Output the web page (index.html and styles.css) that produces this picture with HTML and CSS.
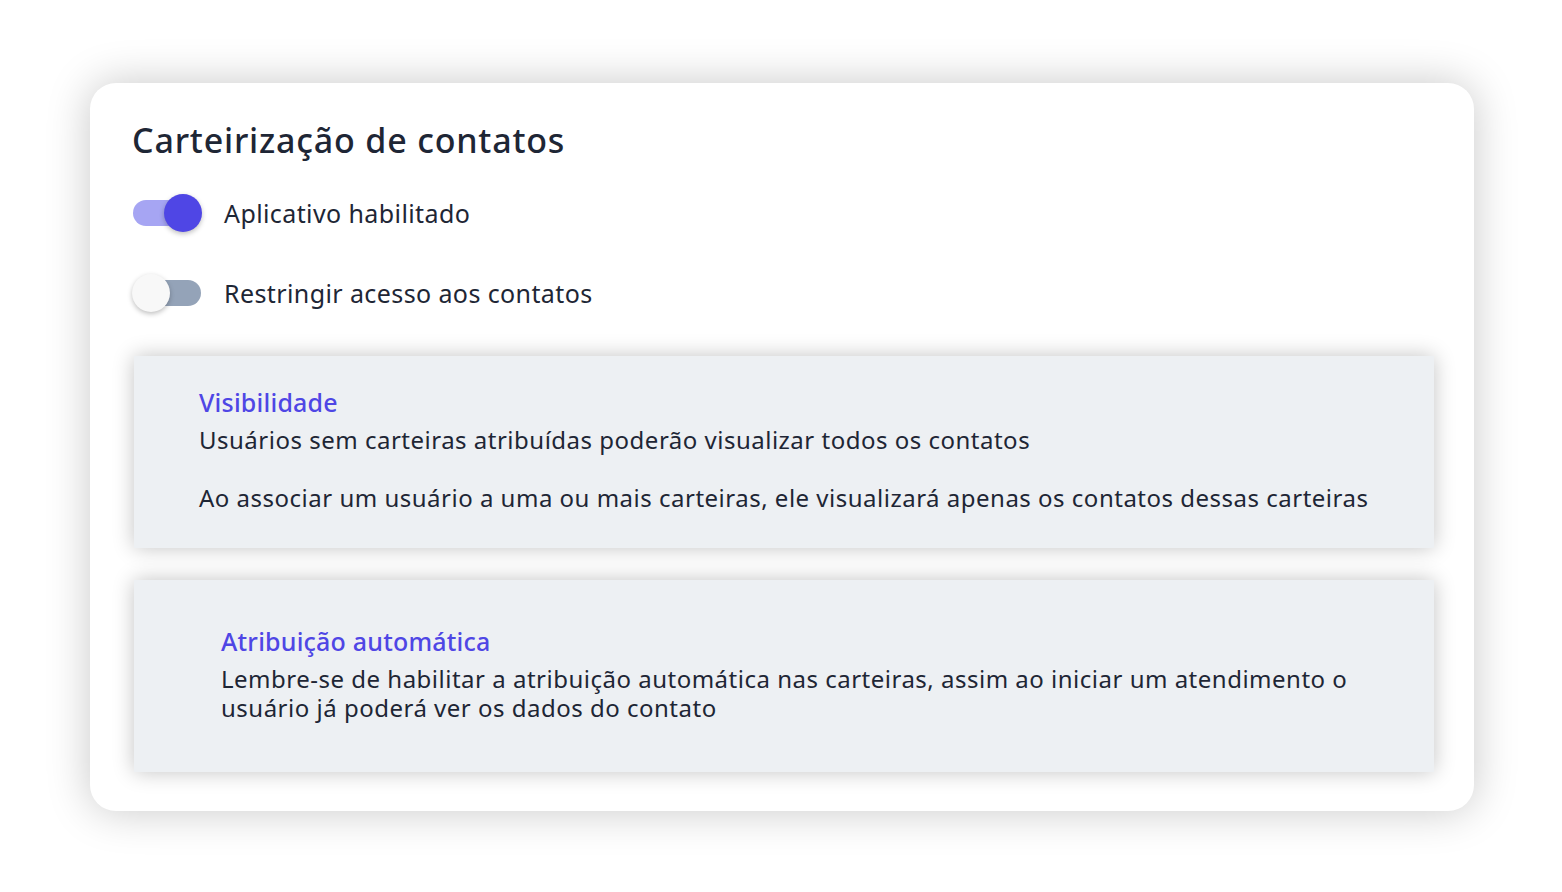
FILE: index.html
```html
<!DOCTYPE html>
<html lang="pt-BR">
<head>
<meta charset="utf-8">
<title>Carteirização de contatos</title>
<link rel="stylesheet" href="styles.css">
</head>
<body>
<main class="page">
  <section class="card">
    <h1 class="card-title">Carteirização de contatos</h1>
    <div class="setting">
      <span class="switch switch-on"><span class="track"></span><span class="thumb"></span></span>
      <span class="setting-label">Aplicativo habilitado</span>
    </div>
    <div class="setting">
      <span class="switch switch-off"><span class="track"></span><span class="thumb"></span></span>
      <span class="setting-label">Restringir acesso aos contatos</span>
    </div>
    <div class="info info-visibility">
      <h2 class="info-title">Visibilidade</h2>
      <p class="info-text">Usuários sem carteiras atribuídas poderão visualizar todos os contatos</p>
      <p class="info-text info-gap">Ao associar um usuário a uma ou mais carteiras, ele visualizará apenas os contatos dessas carteiras</p>
    </div>
    <div class="info info-auto">
      <h2 class="info-title">Atribuição automática</h2>
      <p class="info-text">Lembre-se de habilitar a atribuição automática nas carteiras, assim ao iniciar um atendimento o usuário já poderá ver os dados do contato</p>
    </div>
  </section>
</main>
</body>
</html>
```

FILE: styles.css
```css
* { box-sizing: border-box; }
html, body { margin: 0; padding: 0; background: #ffffff; }
body {
  font-family: "Noto Sans", "Open Sans", sans-serif;
  color: #1e2635;
}
.page {
  padding: 83px 88px 81px 90px;
}
.card {
  width: 1384px;
  height: 728px;
  background: #ffffff;
  border-radius: 26px;
  box-shadow: 0 0 44px rgba(0, 0, 0, 0.22);
  padding: 36px 42px 39px 42px;
  display: flex;
  flex-direction: column;
}
.card-title {
  margin: 0;
  font-size: 34px;
  line-height: 42px;
  font-weight: 500;
  color: #1e2635;
  letter-spacing: 0.8px;
}
.setting {
  display: flex;
  align-items: center;
  gap: 22px;
  height: 38px;
  margin-top: 33px;
}
.setting + .setting { margin-top: 42px; }
.switch {
  position: relative;
  width: 70px;
  height: 38px;
  flex: none;
}
.track {
  position: absolute;
  left: 1px;
  right: 1px;
  top: 6px;
  height: 26px;
  border-radius: 13px;
}
.thumb {
  position: absolute;
  top: 0;
  width: 38px;
  height: 38px;
  border-radius: 50%;
  box-shadow: 0 2px 5px rgba(0, 0, 0, 0.25);
}
.switch-on .track { background: #a6a5f3; }
.switch-on .thumb { right: 0; background: #4f46e5; }
.switch-off .track { background: #94a3b8; }
.switch-off .thumb { left: 0; background: #f8f8f8; }
.setting-label {
  font-size: 25px;
  line-height: 30px;
  color: #1e2635;
  letter-spacing: 0.4px;
}
.info {
  background: #edf0f3;
  margin-left: 2px;
  margin-right: -2px;
  box-shadow: 0 0 20px rgba(0, 0, 0, 0.24);
}
.info-visibility {
  margin-top: 44px;
  height: 192px;
  flex: none;
  padding: 28px 40px 0 65px;
}
.info-auto {
  margin-top: 32px;
  height: 192px;
  flex: none;
  padding: 43px 60px 0 87px;
}
.info-title {
  margin: 0 0 4px;
  font-size: 25px;
  line-height: 37px;
  font-weight: 500;
  color: #4f46e5;
  letter-spacing: 0.2px;
}
.info-text {
  margin: 0;
  font-size: 24px;
  line-height: 29px;
  color: #1e2635;
  letter-spacing: 0.5px;
}
.info-gap { margin-top: 29px; }
```
